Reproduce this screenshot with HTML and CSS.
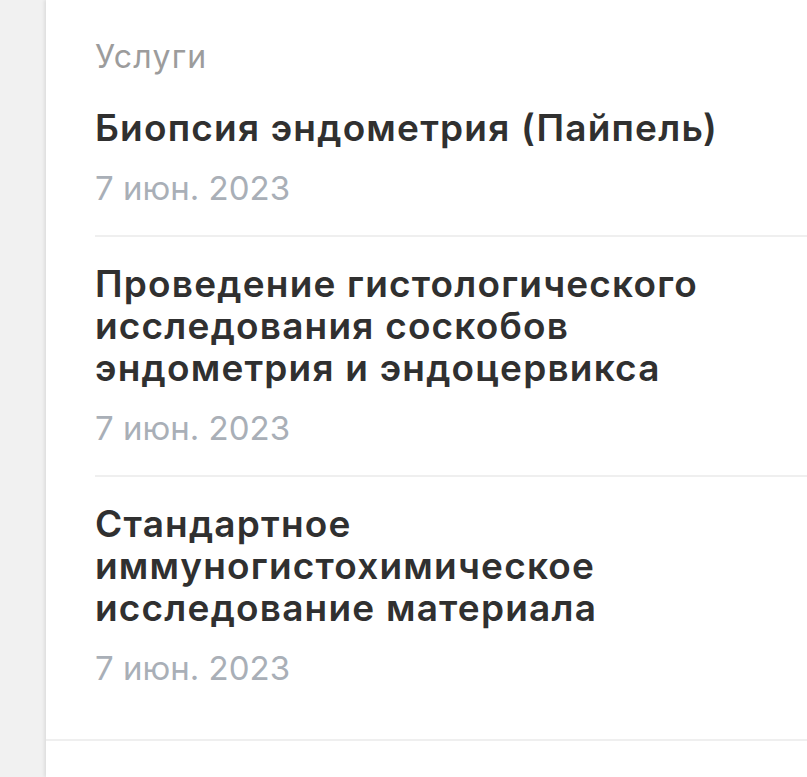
FILE: index.html
```html
<!DOCTYPE html>
<html>
<head>
  <title>Услуги</title>
  <link rel="stylesheet" href="styles.css">
</head>
<body>
  <div class="page">
    <div class="side"></div>
    <div class="card">
      <div class="heading">Услуги</div>
      <div class="list">
        <div class="item">
          <div class="title">Биопсия эндометрия (Пайпель)</div>
          <div class="date">7 июн. 2023</div>
        </div>
        <div class="item">
          <div class="title">Проведение гистологического исследования соскобов эндометрия и эндоцервикса</div>
          <div class="date">7 июн. 2023</div>
        </div>
        <div class="item">
          <div class="title">Стандартное иммуногистохимическое исследование материала</div>
          <div class="date">7 июн. 2023</div>
        </div>
      </div>
      <div class="bottom"></div>
    </div>
  </div>
</body>
</html>
```

FILE: styles.css
```css
body {
  margin: 0;
  background: #f1f1f1;
  font-family: Inter, "Noto Sans", sans-serif;
}

.page {
  display: flex;
  height: 777px;
  overflow: hidden;
}

.side {
  width: 46px;
  flex-shrink: 0;
  background: #f1f1f1;
}

.card {
  flex: 1;
  background: #fff;
  box-shadow: -2px 0 3px rgba(0, 0, 0, 0.08);
  display: flex;
  flex-direction: column;
}

.heading {
  padding: 37px 0 0 49px;
  font-size: 32px;
  line-height: 40px;
  letter-spacing: 1.2px;
  color: #9c9c9c;
}

.list {
  padding-left: 49px;
}

.item {
  padding: 26px 0 27px;
  border-bottom: 2px solid #efefef;
}

.item:first-child {
  padding-top: 30px;
}

.item:last-child {
  border-bottom: none;
}

.title {
  padding-right: 20px;
  font-size: 37px;
  line-height: 42px;
  font-weight: 600;
  letter-spacing: 1.2px;
  color: #303030;
  margin-bottom: 19px;
}

.date {
  font-size: 33px;
  line-height: 40px;
  color: #a9afb7;
}

.bottom {
  margin-top: 24px;
  border-top: 2px solid #efefef;
}
```
